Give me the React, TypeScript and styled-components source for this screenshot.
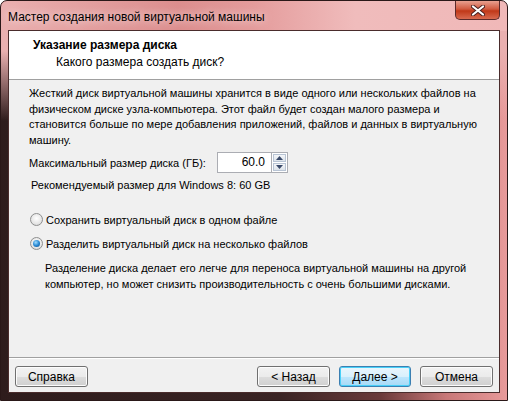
import React from "react";
import styled, { createGlobalStyle } from "styled-components";

const Global = createGlobalStyle`
  html, body { margin: 0; padding: 0; background: #fff; }
  body { font-family: "Liberation Sans", Arial, sans-serif; font-size: 11px; color: #000; }
  * { box-sizing: border-box; }
`;

const Window = styled.div`
  width: 508px;
  height: 401px;
  display: flex;
  flex-direction: column;
  border: 1px solid #2a1818;
  border-radius: 7px 7px 0 0;
  background:
    linear-gradient(90deg, #eab0b0 0%, #dc8e8e 35%, #e49c9c 50%, #f0bcbc 70%, #f0b8b8 100%) 0 0 / 100% 30px no-repeat,
    linear-gradient(180deg, rgba(234,176,176,1) 0px, rgba(234,176,176,1) 50px, rgba(234,176,176,0) 120px),
    linear-gradient(90deg, #2e1c1c 0%, #3a2424 55%, #6a3a3a 75%, #c87878 88%, #e89a9a 100%);
  overflow: hidden;
`;

const TitleBar = styled.div`
  height: 29px;
  display: flex;
  align-items: flex-start;
  justify-content: space-between;
  padding-left: 7px;
`;

const Title = styled.div`
  margin-top: 9px;
  font-size: 12px;
  color: #000;
  text-shadow: 0 0 8px rgba(255,255,255,0.9);
`;

const CloseBtn = styled.div`
  width: 45px;
  height: 19px;
  margin-right: 7px;
  border: 1px solid #5a2a2a;
  border-top: none;
  border-radius: 0 0 5px 5px;
  background: linear-gradient(180deg, #e8a090 0%, #d05a40 45%, #c03818 55%, #d86a50 100%);
  display: flex;
  align-items: center;
  justify-content: center;
`;

const Client = styled.div`
  flex: 1;
  margin: 0 7px 7px 7px;
  border: 1px solid #4a2c2c;
  background: #f0f0f0;
  display: flex;
  flex-direction: column;
`;

const Header = styled.div`
  height: 49px;
  background: #fff;
  border-bottom: 1px solid #a0a0a0;
  padding: 6px 0 0 24px;
  font-size: 12px;
`;

const HeaderTitle = styled.div`
  font-weight: bold;
  line-height: 16px;
`;

const HeaderSub = styled.div`
  margin-top: 1px;
  padding-left: 23px;
  line-height: 16px;
`;

const Body = styled.div`
  flex: 1;
  padding: 6px 20px 0 20px;
  display: flex;
  flex-direction: column;
`;

const Para = styled.div<{ $indent?: number; $top?: number }>`
  margin-top: ${(p) => p.$top ?? 0}px;
  padding-left: ${(p) => p.$indent ?? 0}px;
  display: flex;
  flex-direction: column;
`;

const Line = styled.span`
  line-height: 15.7px;
  white-space: nowrap;
`;

const SizeRow = styled.div`
  display: flex;
  align-items: center;
  margin-top: 3px;
  height: 22px;
`;

const SizeLabel = styled.span`
  width: 188px;
  flex-shrink: 0;
  white-space: nowrap;
`;

const Spin = styled.div`
  display: flex;
  align-items: stretch;
  height: 21px;
`;

const SpinInput = styled.div`
  width: 54px;
  background: #fff;
  border: 1px solid #abadb3;
  border-right: none;
  text-align: right;
  padding-right: 6px;
  line-height: 19px;
  font-size: 12px;
`;

const SpinButtons = styled.div`
  width: 17px;
  display: flex;
  flex-direction: column;
  gap: 1px;
  background: #fff;
  border: 1px solid #abadb3;
  padding: 1px;
`;

const SpinBtn = styled.div`
  flex: 1;
  border: 1px solid #b8c4d4;
  background: linear-gradient(180deg, #f4f6f9, #dde3ea);
  display: flex;
  align-items: center;
  justify-content: center;
`;

const Recommend = styled.div`
  margin-top: 3px;
  padding-left: 2px;
  line-height: 16px;
`;

const RadioGroup = styled.div`
  margin-top: 19px;
  display: flex;
  flex-direction: column;
  gap: 8px;
`;

const RadioRow = styled.label`
  display: flex;
  align-items: center;
  gap: 3px;
  height: 16px;
`;

const RadioDot = styled.span<{ $checked?: boolean }>`
  width: 13px;
  height: 13px;
  margin-left: 1px;
  border-radius: 50%;
  border: 1px solid #8e8f8f;
  background: radial-gradient(circle at 50% 40%, #ffffff 0%, #e6e6e6 60%, #cfcfcf 100%);
  display: flex;
  align-items: center;
  justify-content: center;
  &::after {
    content: "";
    display: ${(p) => (p.$checked ? "block" : "none")};
    width: 7px;
    height: 7px;
    border-radius: 50%;
    background: radial-gradient(circle at 40% 35%, #9fdcff 0%, #2a8ad4 50%, #0a4a8a 100%);
  }
`;

const Footer = styled.div`
  height: 35px;
  border-top: 1px solid #a0a0a0;
  box-shadow: inset 0 1px 0 #fff;
  display: flex;
  align-items: flex-start;
  padding: 8px 6px 0 6px;
`;

const Spacer = styled.div`
  flex: 1;
`;

const Button = styled.button<{ $default?: boolean; $gap?: number }>`
  width: ${(p) => (p.$default ? 72 : 73)}px;
  height: 21px;
  margin-left: ${(p) => p.$gap ?? 0}px;
  font: inherit;
  font-size: 12px;
  color: #000;
  border-radius: 3px;
  border: 1px solid ${(p) => (p.$default ? "#3c7fb1" : "#707070")};
  background: ${(p) =>
    p.$default
      ? "linear-gradient(180deg, #eaf6fd 0%, #d9f0fc 50%, #bee6fd 50%, #a7d9f5 100%)"
      : "linear-gradient(180deg, #f2f2f2 0%, #ebebeb 50%, #dddddd 50%, #cfcfcf 100%)"};
  box-shadow: inset 0 0 0 1px ${(p) => (p.$default ? "#48d0f8" : "#fcfcfc")};
  padding: 0;
`;

export default function App() {
  return (
    <>
      <Global />
      <Window>
        <TitleBar>
          <Title>Мастер создания новой виртуальной машины</Title>
          <CloseBtn>
            <svg width="14" height="11" viewBox="0 0 14 11">
              <path d="M2 1.5 L12 9.5 M12 1.5 L2 9.5" stroke="#4a2020" strokeWidth="4" strokeLinecap="round" />
              <path d="M2 1.5 L12 9.5 M12 1.5 L2 9.5" stroke="#ffffff" strokeWidth="2.2" strokeLinecap="round" />
            </svg>
          </CloseBtn>
        </TitleBar>
        <Client>
          <Header>
            <HeaderTitle>Указание размера диска</HeaderTitle>
            <HeaderSub>Какого размера создать диск?</HeaderSub>
          </Header>
          <Body>
            <Para>
              <Line>Жесткий диск виртуальной машины хранится в виде одного или нескольких файлов на</Line>
              <Line>физическом диске узла-компьютера. Этот файл будет создан малого размера и</Line>
              <Line>становится больше по мере добавления приложений, файлов и данных в виртуальную</Line>
              <Line>машину.</Line>
            </Para>
            <SizeRow>
              <SizeLabel>Максимальный размер диска (ГБ):</SizeLabel>
              <Spin>
                <SpinInput>60.0</SpinInput>
                <SpinButtons>
                  <SpinBtn>
                    <svg width="7" height="4" viewBox="0 0 7 4"><path d="M0 4 L3.5 0 L7 4 Z" fill="#3a4a6a" /></svg>
                  </SpinBtn>
                  <SpinBtn>
                    <svg width="7" height="4" viewBox="0 0 7 4"><path d="M0 0 L3.5 4 L7 0 Z" fill="#3a4a6a" /></svg>
                  </SpinBtn>
                </SpinButtons>
              </Spin>
            </SizeRow>
            <Recommend>Рекомендуемый размер для Windows 8: 60 GB</Recommend>
            <RadioGroup>
              <RadioRow>
                <RadioDot />
                Сохранить виртуальный диск в одном файле
              </RadioRow>
              <RadioRow>
                <RadioDot $checked />
                Разделить виртуальный диск на несколько файлов
              </RadioRow>
            </RadioGroup>
            <Para $indent={16} $top={9}>
              <Line>Разделение диска делает его легче для переноса виртуальной машины на другой</Line>
              <Line>компьютер, но может снизить производительность с очень большими дисками.</Line>
            </Para>
          </Body>
          <Footer>
            <Button>Справка</Button>
            <Spacer />
            <Button>&lt; Назад</Button>
            <Button $default $gap={9}>Далее &gt;</Button>
            <Button $gap={9}>Отмена</Button>
          </Footer>
        </Client>
      </Window>
    </>
  );
}
